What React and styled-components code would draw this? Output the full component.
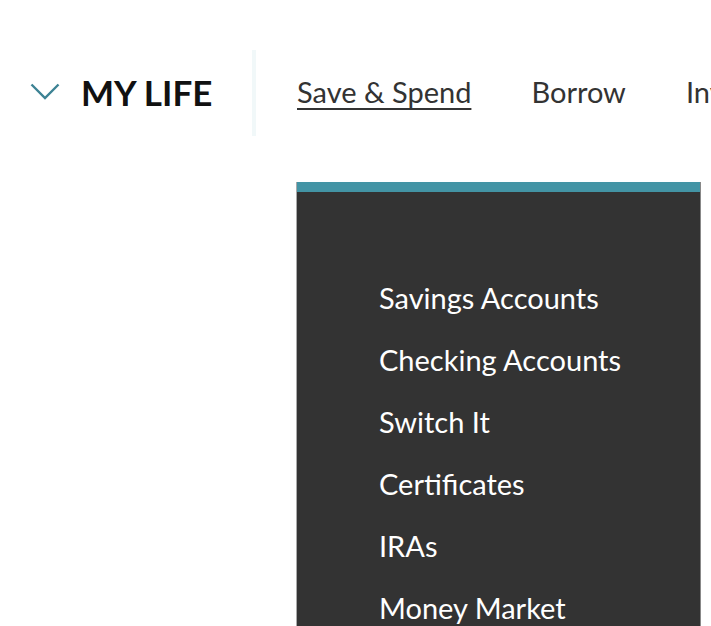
import React from 'react'
import styled, { createGlobalStyle } from 'styled-components'

const GlobalStyle = createGlobalStyle`
  html, body {
    margin: 0;
    padding: 0;
    background: #fff;
    overflow: hidden;
  }
  body {
    font-family: Lato, "Noto Sans", sans-serif;
    color: #333;
  }
`

const Page = styled.div`
  position: relative;
  width: 711px;
  height: 626px;
  overflow: hidden;
`

const Header = styled.header`
  display: flex;
  align-items: stretch;
  height: 86px;
  margin-top: 50px;
`

const Brand = styled.button`
  flex: none;
  box-sizing: border-box;
  display: flex;
  align-items: center;
  gap: 21px;
  width: 252px;
  padding: 0 0 0 30px;
  margin: -3px 0 0;
  background: none;
  border: 0;
  font-family: inherit;
  font-size: 35px;
  font-weight: 700;
  color: #111;
  white-space: nowrap;
  cursor: pointer;
`

const Divider = styled.div`
  flex: none;
  width: 4px;
  background: #f1f8f9;
`

const Nav = styled.nav`
  display: flex;
  align-items: center;
  gap: 60px;
  padding-left: 41px;
  margin-top: -4px;
  white-space: nowrap;
`

const NavLink = styled.a`
  font-size: 29px;
  color: #333;
  text-decoration: ${(p) => (p.$active ? 'underline' : 'none')};
  text-decoration-thickness: 2px;
  text-underline-offset: 5px;
`

const Dropdown = styled.div`
  position: absolute;
  left: 297px;
  top: 182px;
  width: 403px;
  bottom: -40px;
  background: #333;
  border-top: 10px solid #4394a5;
  box-shadow: 1px 0 0 #888, -1px 0 0 #aaa;
`

const MenuList = styled.ul`
  list-style: none;
  margin: 0;
  padding: 90px 0 0 82px;
  display: flex;
  flex-direction: column;
  gap: 30px;
`

const MenuItem = styled.li`
  font-size: 29px;
  line-height: 32px;
  color: #fff;
`

const Chevron = () => (
  <svg width="30" height="17" viewBox="0 0 30 17" fill="none">
    <path d="M1.5 1.5 L15 15 L28.5 1.5" stroke="#3d8394" strokeWidth="2.4" />
  </svg>
)

const items = [
  'Savings Accounts',
  'Checking Accounts',
  'Switch It',
  'Certificates',
  'IRAs',
  'Money Market',
]

export default function App() {
  return (
    <Page>
      <GlobalStyle />
      <Header>
        <Brand>
          <Chevron />
          MY LIFE
        </Brand>
        <Divider />
        <Nav>
          <NavLink $active>Save &amp; Spend</NavLink>
          <NavLink>Borrow</NavLink>
          <NavLink>Invest</NavLink>
        </Nav>
      </Header>
      <Dropdown>
        <MenuList>
          {items.map((label) => (
            <MenuItem key={label}>{label}</MenuItem>
          ))}
        </MenuList>
      </Dropdown>
    </Page>
  )
}
